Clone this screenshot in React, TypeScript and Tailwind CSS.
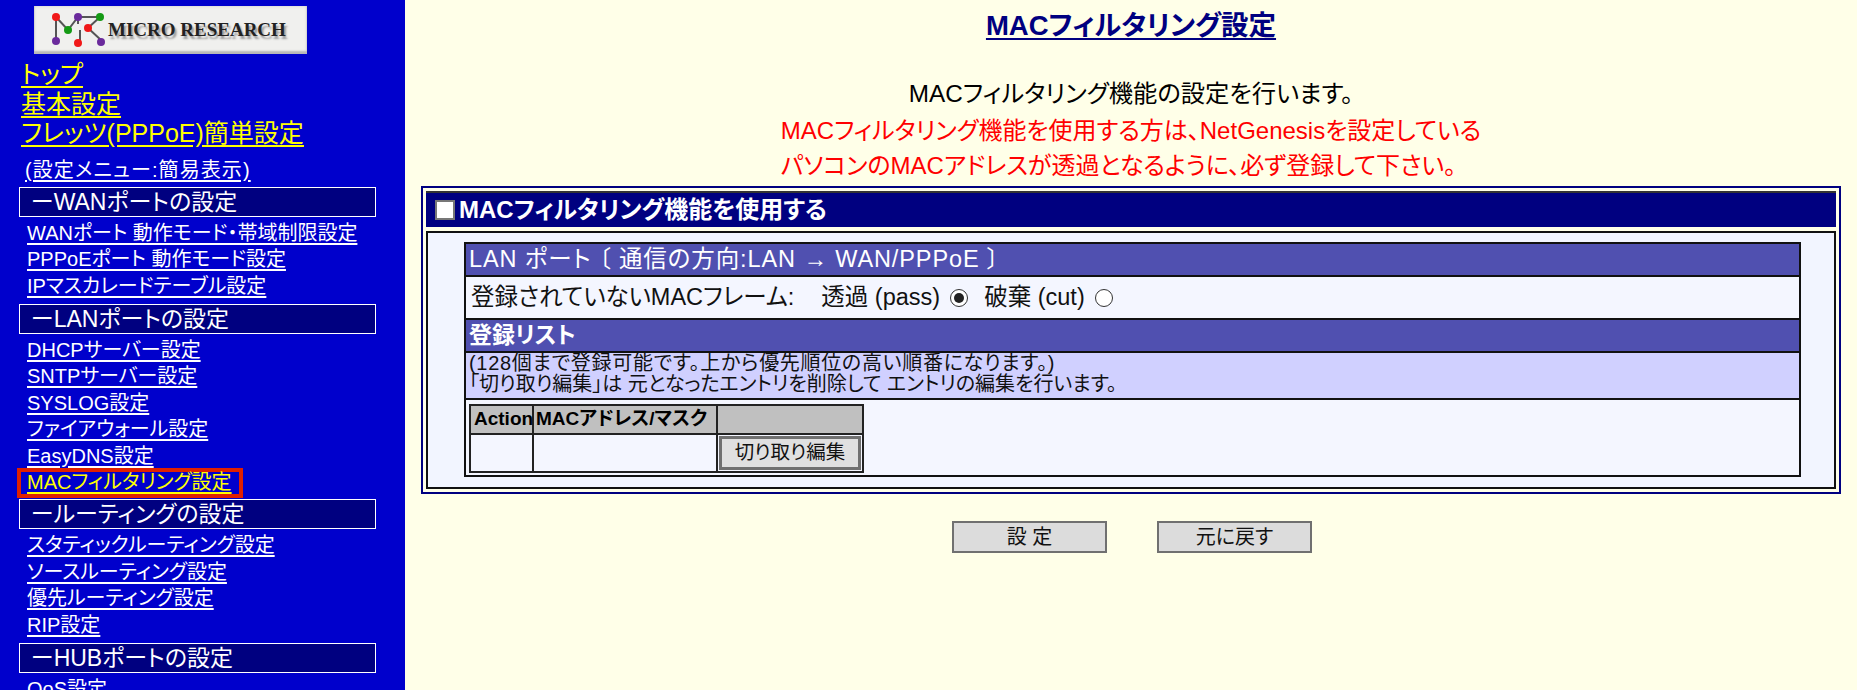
const FONT = "font-['Liberation_Sans','Noto_Sans_CJK_JP',sans-serif] [font-feature-settings:'palt']"

const SECTIONS: Array<{ title: string; links: string[]; current?: string }> = [
  {
    title: 'ーWANポートの設定',
    links: ['WANポート 動作モード・帯域制限設定', 'PPPoEポート 動作モード設定', 'IPマスカレードテーブル設定'],
  },
  {
    title: 'ーLANポートの設定',
    links: ['DHCPサーバー設定', 'SNTPサーバー設定', 'SYSLOG設定', 'ファイアウォール設定', 'EasyDNS設定', 'MACフィルタリング設定'],
    current: 'MACフィルタリング設定',
  },
  {
    title: 'ールーティングの設定',
    links: ['スタティックルーティング設定', 'ソースルーティング設定', '優先ルーティング設定', 'RIP設定'],
  },
  {
    title: 'ーHUBポートの設定',
    links: ['QoS設定'],
  },
]

const Logo = () => (
  <div className="ml-[34px] flex h-12 w-[273px] items-center bg-[#f0f0ee] pl-[18px] shadow-[inset_0_-3px_2px_#b8b8b8,inset_0_0_3px_#c8c8c8]">
    <svg width="56" height="36" viewBox="0 0 56 36" className="shrink-0">
      <g stroke="#555" strokeWidth="2" fill="none">
        <path d="M4 5 L4 28 M4 5 L16 18 L26 5 L26 12 M26 5 L48 5 L36 16 L50 29 M28 18 L28 30" />
      </g>
      <circle cx="4" cy="5" r="4" fill="#f01818" />
      <circle cx="26" cy="5" r="4" fill="#6a2a9c" />
      <circle cx="48" cy="5" r="4" fill="#149a14" />
      <circle cx="16" cy="18" r="4" fill="#149a14" />
      <circle cx="36" cy="16" r="4" fill="#f01818" />
      <circle cx="4" cy="29" r="4" fill="#6a2a9c" />
      <circle cx="26" cy="31" r="4" fill="#f01818" />
      <circle cx="49" cy="30" r="4" fill="#6a2a9c" />
    </svg>
    <span className="font-['Liberation_Serif',serif] text-[19px] font-bold whitespace-nowrap text-[#222] [text-shadow:2px_3px_2px_#999]">
      MICRO RESEARCH
    </span>
  </div>
)

const Sidebar = () => (
  <nav className="h-[690px] w-[405px] shrink-0 overflow-hidden bg-[#0000cc] pt-[6px]">
    <Logo />
    <div className="mt-[6px] flex flex-col items-start pl-[21px] text-[25px] leading-[29.5px] text-[#ffff00] underline underline-offset-[3px]">
      <a>トップ</a>
      <a>基本設定</a>
      <a>フレッツ(PPPoE)簡単設定</a>
    </div>
    <div className="mt-[9px] h-[29px] pl-[25px] text-[20px] leading-[24px] tracking-[1.1px] text-white underline underline-offset-[3px]">
      (設定メニュー:簡易表示)
    </div>
    {SECTIONS.map((section) => (
      <div key={section.title} className={section.current ? 'mb-[1px]' : 'mb-[5.5px]'}>
        <div className="ml-[19px] h-[30px] w-[357px] border border-white bg-[#000080] pl-[11px] text-[23px] leading-[28px] text-white">
          {section.title}
        </div>
        <div className="mt-[2px] flex flex-col items-start">
          {section.links.map((link) =>
            link === section.current ? (
              <a key={link} className="ml-[17px] h-[30px] w-[226px] border-[4px] border-[#e02000] pl-[6px] text-[20px] leading-[21px] whitespace-nowrap text-[#ffff00] underline underline-offset-[3px]">
                {link}
              </a>
            ) : (
              <a key={link} className="ml-[27px] h-[26.5px] text-[20px] leading-[29px] whitespace-nowrap text-white underline underline-offset-[3px]">
                {link}
              </a>
            ),
          )}
        </div>
      </div>
    ))}
  </nav>
)

const Radio = ({ checked }: { checked?: boolean }) => (
  <span className="ml-[10px] inline-flex h-[18px] w-[18px] items-center justify-center rounded-full border border-[#333] bg-white">
    {checked && <span className="h-[10px] w-[10px] rounded-full bg-[#222]" />}
  </span>
)

const Button = ({ label }: { label: string }) => (
  <button className="h-8 w-[155px] border-2 border-[#707070] bg-[#dcdcdc] text-[20px] leading-none text-[#111]">{label}</button>
)

const RegisterTable = () => (
  <div className="mt-[4px] ml-[3px] w-[395px] border-2 border-[#222] text-black">
    <div className="flex h-[27px] bg-[#c0c0c0] text-[19px] leading-[26px] font-bold">
      <div className="w-[63px] border-r-2 border-[#222] pl-[3px]">Action</div>
      <div className="w-[184px] border-r-2 border-[#222] pl-[2px]">MACアドレス/マスク</div>
      <div className="flex-1" />
    </div>
    <div className="flex h-[38px] border-t-2 border-[#222] bg-[#f4f6ff]">
      <div className="w-[63px] border-r-2 border-[#222]" />
      <div className="w-[184px] border-r-2 border-[#222]" />
      <div className="flex-1 p-[1px]">
        <button className="h-[34px] w-full border-[3px] border-[#707070] bg-[#e0e0e0] text-[19.5px] leading-none text-[#111]">切り取り編集</button>
      </div>
    </div>
  </div>
)

const Panel = () => (
  <section className="mx-[16px] h-[308px] w-[1420px] border-2 border-[#000080] p-[3px]">
    <div className="flex h-[36px] items-center border-t-2 border-[#333] bg-[#000080] pl-[9px] text-[24px] font-bold text-white">
      <span className="mr-[4px] h-[20px] w-[20px] border-[2px] border-[#777] bg-white" />
      MACフィルタリング機能を使用する
    </div>
    <div className="mt-[4px] h-[258px] border-2 border-[#111] bg-[#f2f5ff] pt-[9px] pr-[33px] pl-[36px]">
      <div className="h-[235px] border-2 border-[#111] bg-[#f4f6ff]">
        <div className="h-[31px] bg-[#5050b0] pl-[3px] text-[23.5px] leading-[31px] tracking-[0.9px] whitespace-pre text-white">
          {'LAN ポート 〔 通信の方向:LAN → WAN/PPPoE 〕'}
        </div>
        <div className="flex h-[45px] items-center border-y-2 border-[#111] pl-[5px] text-[23.5px] whitespace-pre text-[#111]">
          <span>登録されていないMACフレーム:</span>
          <span className="ml-[27px]">透過 (pass)</span>
          <Radio checked />
          <span className="ml-[16px]">破棄 (cut)</span>
          <Radio />
        </div>
        <div className="h-[31px] bg-[#5050b0] pl-[3px] text-[23px] leading-[31px] font-bold text-white">登録リスト</div>
        <div className="h-[49px] border-y-2 border-[#111] bg-[#d0d0ff] pl-[3px] text-[20px] leading-[21px] text-[#111]">
          <p className="tracking-[0.7px]">(128個まで登録可能です。上から優先順位の高い順番になります。)</p>
          <p>「切り取り編集」は 元となったエントリを削除して エントリの編集を行います。</p>
        </div>
        <RegisterTable />
      </div>
    </div>
  </section>
)

const App = () => (
  <div className={`flex h-[690px] w-[1857px] overflow-hidden bg-[#ffffe8] ${FONT}`}>
    <Sidebar />
    <main className="flex min-w-0 flex-1 flex-col items-center">
      <h1 className="mt-[11px] h-[30px] text-[27.5px] leading-[30px] font-bold text-[#000080] underline underline-offset-[3px]">MACフィルタリング設定</h1>
      <p className="mt-[37px] h-[36px] text-[24.3px] leading-[32px] text-black">MACフィルタリング機能の設定を行います。</p>
      <div className="flex flex-col items-start text-[24px] text-[#ff0000]">
        <p className="h-[35px] leading-[33px]">MACフィルタリング機能を使用する方は、NetGenesisを設定している</p>
        <p className="h-[37px] leading-[34px]">パソコンのMACアドレスが透過となるように、必ず登録して下さい。</p>
      </div>
      <Panel />
      <div className="mt-[27px] ml-[2px] flex gap-[50px]">
        <Button label="設 定" />
        <Button label="元に戻す" />
      </div>
    </main>
  </div>
)

export default App
